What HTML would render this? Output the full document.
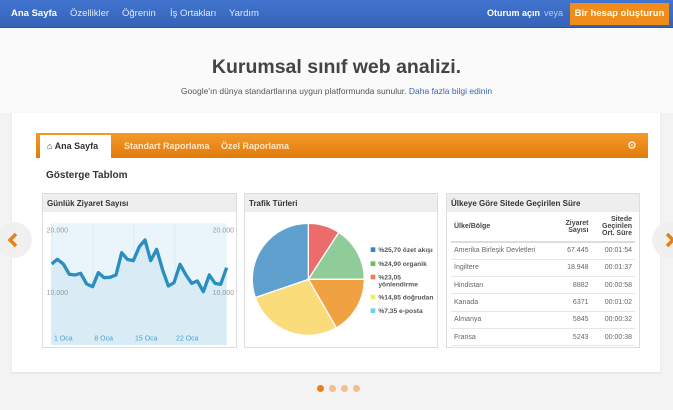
<!DOCTYPE html>
<html><head><meta charset="utf-8"><style>
*{margin:0;padding:0;box-sizing:border-box}
body{width:673px;height:410px;overflow:hidden;background:#f3f3f3;font-family:"Liberation Sans",sans-serif;position:relative}
.a{position:absolute}
.nav{left:0;top:0;width:673px;height:28px;background:linear-gradient(#4275cf,#3563b8);border-bottom:1px solid #2d549c}
.nav span{position:absolute;top:8px;font-size:9.5px;color:#dfe8f8}
.top{left:0;top:28px;width:673px;height:85px;background:#fafafa}
.card{left:12px;top:113px;width:648px;height:259px;background:#fff;box-shadow:0 1px 2px #ddd}
.panel{background:#fff;border:1px solid #ddd;top:193px;height:155px}
.ph{height:18px;background:#eee;font-size:8px;font-weight:bold;color:#333;padding:5px 4px}
table{border-collapse:collapse;font-size:7px;color:#666;width:184px;margin-left:4px}
td{height:17.3px;border-bottom:1px solid #e6e6e6;padding:0 3px}
</style></head><body>
<div class="a nav">
<span style="left:11px;color:#fff;font-weight:bold">Ana Sayfa</span>
<span style="left:70px">Özellikler</span>
<span style="left:122px">Öğrenin</span>
<span style="left:170px">İş Ortakları</span>
<span style="left:229px">Yardım</span>
<span style="left:487px;color:#fff;font-weight:bold;font-size:9px">Oturum açın</span>
<span style="left:544px;font-size:9px;color:#b8c8e8">veya</span>
<div class="a" style="left:570px;top:3px;width:99px;height:22px;background:#f08c1a;color:#fff;font-size:9.5px;text-align:center;line-height:22px;font-weight:bold">Bir hesap oluşturun</div>
</div>
<div class="a top"></div>
<div class="a" style="left:0;top:56px;width:673px;text-align:center;font-size:19.5px;font-weight:bold;color:#444">Kurumsal sınıf web analizi.</div>
<div class="a" style="left:0;top:86px;width:673px;text-align:center;font-size:8.5px;color:#555">Google'ın dünya standartlarına uygun platformunda sunulur. <span style="color:#3a64b5">Daha fazla bilgi edinin</span></div>
<div class="a card"></div>
<div class="a" style="left:36px;top:133px;width:612px;height:25px;background:linear-gradient(#f59a2a,#e07b0c)"></div>
<div class="a" style="left:40px;top:135px;width:71px;height:23px;background:#fff;font-size:9px;font-weight:bold;color:#333;padding:6px 0 0 7px">&#8962; Ana Sayfa</div>
<div class="a" style="left:124px;top:141px;font-size:9px;font-weight:bold;color:#fde6c8">Standart Raporlama</div>
<div class="a" style="left:221px;top:141px;font-size:9px;font-weight:bold;color:#fde6c8">Özel Raporlama</div>
<div class="a" style="left:627px;top:139px;font-size:11px;color:#fff">&#9881;</div>
<div class="a" style="left:46px;top:170px;font-size:10px;font-weight:bold;color:#333">Gösterge Tablom</div>
<div class="a panel" style="left:42px;width:195px"><div class="ph">Günlük Ziyaret Sayısı</div></div>
<div class="a panel" style="left:244px;width:194px"><div class="ph">Trafik Türleri</div></div>
<div class="a panel" style="left:446px;width:194px"><div class="ph">Ülkeye Göre Sitede Geçirilen Süre</div>
<table>
<tr style="font-weight:bold;color:#444"><td style="height:30px;border-bottom:2px solid #ddd">Ülke/Bölge</td><td style="text-align:right;border-bottom:2px solid #ddd">Ziyaret<br>Sayısı</td><td style="text-align:right;border-bottom:2px solid #ddd">Sitede<br>Geçirilen<br>Ort. Süre</td></tr>
<tr><td>Amerika Birleşik Devletleri</td><td style="text-align:right">67.445</td><td style="text-align:right">00:01:54</td></tr>
<tr><td>İngiltere</td><td style="text-align:right">18.948</td><td style="text-align:right">00:01:37</td></tr>
<tr><td>Hindistan</td><td style="text-align:right">8882</td><td style="text-align:right">00:00:58</td></tr>
<tr><td>Kanada</td><td style="text-align:right">6371</td><td style="text-align:right">00:01:02</td></tr>
<tr><td>Almanya</td><td style="text-align:right">5845</td><td style="text-align:right">00:00:32</td></tr>
<tr><td>Fransa</td><td style="text-align:right">5243</td><td style="text-align:right">00:00:38</td></tr>
</table></div>
<svg class="a" style="left:30px;top:120px" width="420" height="230" viewBox="0 0 1260 690" font-family="Liberation Sans,sans-serif">
<rect x="65" y="310" width="525" height="365" fill="#eaf5fb"/>
<g stroke="#dde9f0" stroke-width="3"><line x1="65" y1="310" x2="65" y2="675"/><line x1="190" y1="310" x2="190" y2="675"/><line x1="312" y1="310" x2="312" y2="675"/><line x1="435" y1="310" x2="435" y2="675"/><line x1="65" y1="498" x2="590" y2="498"/></g>
<polygon fill="#d9ecf6" points="65,432 82,418 100,432 118,463 135,465 152,460 170,492 188,500 205,458 222,473 240,472 258,465 275,398 292,418 310,422 328,380 345,360 362,422 380,388 398,450 415,498 432,488 450,433 468,465 485,490 502,483 520,515 538,465 555,490 572,493 590,443 590,675 65,675"/>
<polyline fill="none" stroke="#2a8fc0" stroke-width="10" stroke-linejoin="round" points="65,432 82,418 100,432 118,463 135,465 152,460 170,492 188,500 205,458 222,473 240,472 258,465 275,398 292,418 310,422 328,380 345,360 362,422 380,388 398,450 415,498 432,488 450,433 468,465 485,490 502,483 520,515 538,465 555,490 572,493 590,443"/>
<g font-size="21" fill="#999"><text x="50" y="337">20.000</text><text x="548" y="337">20.000</text><text x="50" y="525">10.000</text><text x="548" y="525">10.000</text></g>
<g font-size="21" fill="#4aa3cf"><text x="72" y="662">1 Oca</text><text x="193" y="662">8 Oca</text><text x="315" y="662">15 Oca</text><text x="438" y="662">22 Oca</text></g>
<g stroke="#fff" stroke-width="4">
<path d="M835,478 L835,310 A168,168 0 0 1 926.5,337 Z" fill="#ee6b6b"/>
<path d="M835,478 L926.5,337 A168,168 0 0 1 1003,478 Z" fill="#8fcc9a"/>
<path d="M835,478 L1003,478 A168,168 0 0 1 919,623.5 Z" fill="#f0a243"/>
<path d="M835,478 L919,623.5 A168,168 0 0 1 676,532.7 Z" fill="#fbdc7a"/>
<path d="M835,478 L676,532.7 A168,168 0 0 1 835,310 Z" fill="#5fa0cf"/>
</g>
<g font-size="20" font-weight="bold" fill="#555">
<rect x="1022" y="382" width="14" height="14" fill="#2f86c8"/><text x="1045" y="396">%25,70 özet akışı</text>
<rect x="1022" y="424" width="14" height="14" fill="#6ac05a"/><text x="1045" y="438">%24,90 organik</text>
<rect x="1022" y="464" width="14" height="14" fill="#ee7b5b"/><text x="1045" y="478">%23,05</text><text x="1045" y="500">yönlendirme</text>
<rect x="1022" y="524" width="14" height="14" fill="#f0ee5a"/><text x="1045" y="538">%14,85 doğrudan</text>
<rect x="1022" y="565" width="14" height="14" fill="#6fd0ee"/><text x="1045" y="579">%7,35 e-posta</text>
</g>
</svg>
<div class="a" style="left:-4px;top:222px;width:36px;height:36px;border-radius:50%;background:#f0f0f0"></div>
<svg class="a" style="left:6px;top:232px" width="14" height="16"><path d="M10,2 L4,8 L10,14" fill="none" stroke="#e8801a" stroke-width="3.5"/></svg>
<div class="a" style="left:652px;top:222px;width:36px;height:36px;border-radius:50%;background:#f0f0f0"></div>
<svg class="a" style="left:663px;top:232px" width="14" height="16"><path d="M4,2 L10,8 L4,14" fill="none" stroke="#e8801a" stroke-width="3.5"/></svg>
<div class="a" style="left:317px;top:385px;width:7px;height:7px;border-radius:50%;background:#e8801a"></div>
<div class="a" style="left:329px;top:385px;width:7px;height:7px;border-radius:50%;background:#f3bf8a"></div>
<div class="a" style="left:341px;top:385px;width:7px;height:7px;border-radius:50%;background:#f3bf8a"></div>
<div class="a" style="left:353px;top:385px;width:7px;height:7px;border-radius:50%;background:#f3bf8a"></div>
</body></html>
